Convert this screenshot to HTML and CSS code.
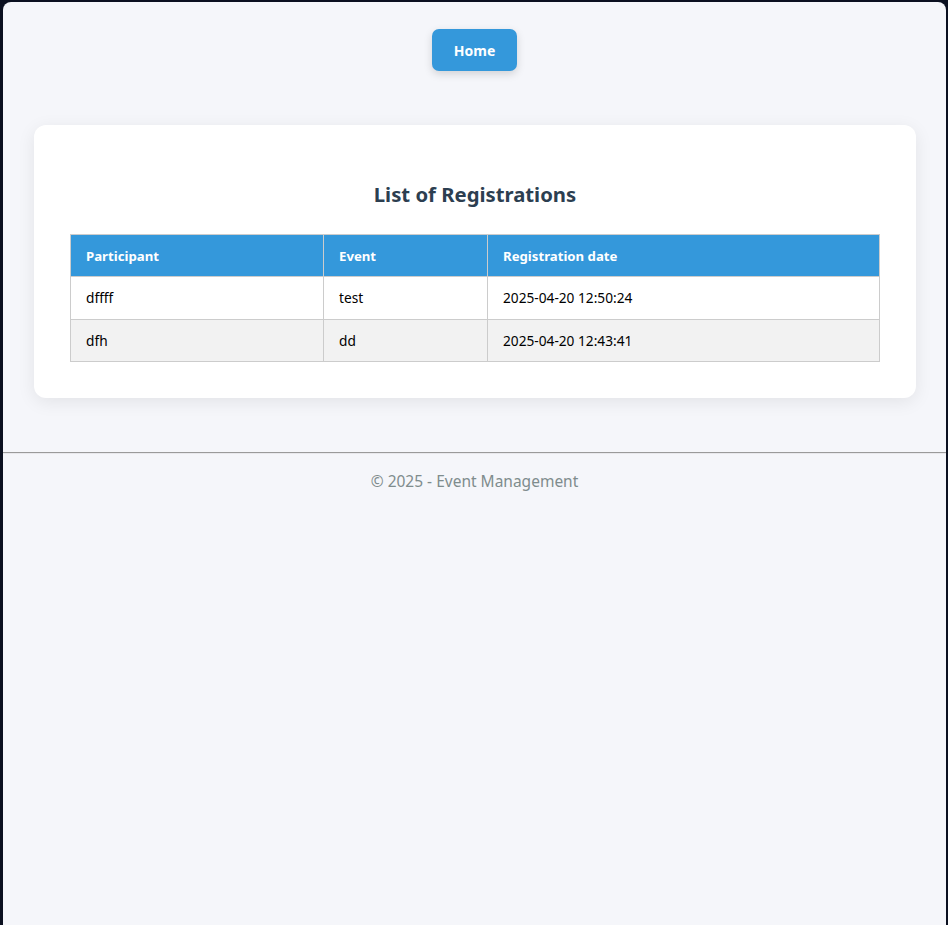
FILE: index.html
```html
<!DOCTYPE html>
<html lang="en">
<head>
<meta charset="utf-8">
<title>List of Registrations</title>
<link rel="stylesheet" href="styles.css">
</head>
<body>
<div class="window">
  <nav class="nav">
    <a class="btn" href="#">Home</a>
  </nav>
  <main class="card">
    <h2 class="title">List of Registrations</h2>
    <table class="table">
      <colgroup>
        <col class="c1"><col class="c2"><col class="c3">
      </colgroup>
      <thead>
        <tr><th>Participant</th><th>Event</th><th>Registration date</th></tr>
      </thead>
      <tbody>
        <tr><td>dffff</td><td>test</td><td>2025-04-20 12:50:24</td></tr>
        <tr class="alt"><td>dfh</td><td>dd</td><td>2025-04-20 12:43:41</td></tr>
      </tbody>
    </table>
  </main>
  <hr class="rule">
  <footer class="footer">© 2025 - Event Management</footer>
</div>
</body>
</html>
```
FILE: styles.css
```css
html, body {
  margin: 0;
  padding: 0;
  height: 100%;
}
body {
  background: #0b1020;
  font-family: "Noto Sans", "Open Sans", sans-serif;
}
.window {
  margin: 2px 2px 0 3px;
  min-height: 923px;
  background: #f5f6fa;
  border-radius: 8px 8px 0 0;
  overflow: hidden;
}
.nav {
  display: flex;
  justify-content: center;
  padding-top: 27px;
}
.btn {
  display: block;
  width: 85px;
  height: 42px;
  line-height: 44px;
  text-align: center;
  background: #3498db;
  color: #fff;
  font-weight: 700;
  font-size: 14px;
  text-decoration: none;
  border-radius: 7px;
  box-shadow: 0 3px 8px rgba(0, 0, 0, 0.15);
}
.card {
  display: block;
  margin: 54px 30px 0 31px;
  background: #fff;
  border-radius: 12px;
  padding: 30px 36px 36px;
  box-shadow: 0 4px 18px rgba(0, 0, 0, 0.08);
}
.title {
  margin: 24px 0 25px;
  text-align: center;
  font-size: 20.3px;
  line-height: 30px;
  font-weight: 700;
  color: #2c3e50;
}
.table {
  width: 100%;
  border-collapse: collapse;
  table-layout: fixed;
  font-size: 13.7px;
}
.c1 { width: 253px; }
.c2 { width: 164px; }
.table th, .table td {
  border: 1px solid #cccccc;
  padding: 12px 15px;
  line-height: 17.5px;
  text-align: left;
}
.table th {
  background: #3498db;
  color: #fff;
  font-weight: 700;
  font-size: 13.2px;
  padding: 12px 15px 11px;
  line-height: 18px;
}
.table td {
  color: #000;
}
.table tr.alt td {
  background: #f2f2f2;
}
.rule {
  margin: 54px 0 8px;
  border: 0;
  border-top: 1px solid #9a9a9a;
  border-bottom: 1px solid #e8e8ec;
  height: 0;
}
.footer {
  text-align: center;
  color: #7f8c8d;
  font-size: 15.5px;
  line-height: 38px;
}
```
